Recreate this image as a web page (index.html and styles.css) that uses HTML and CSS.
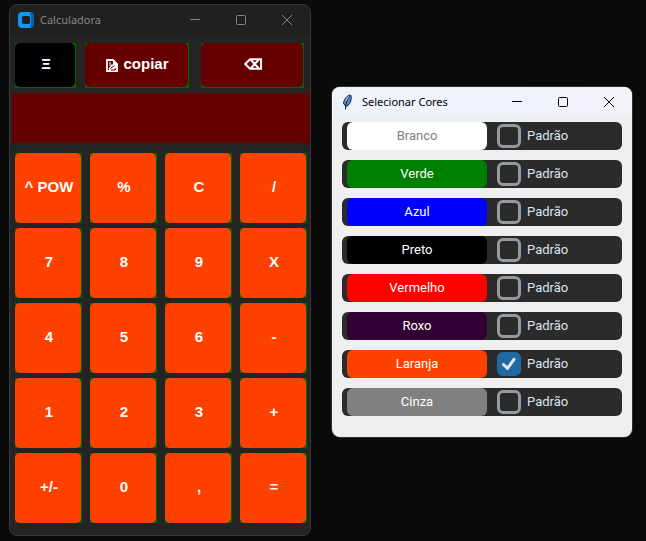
FILE: index.html
```
<!DOCTYPE html>
<html lang="pt">
<head>
<meta charset="utf-8">
<title>Calculadora</title>
<link rel="stylesheet" href="styles.css">
</head>
<body>
<main class="desktop">
  <section class="window calc">
    <header class="titlebar">
      <svg class="app-icon" width="16" height="16" viewBox="0 0 16 16"><path fill="#0c98fb" d="M4 0h9v16H4a4 4 0 0 1-4-4V4a4 4 0 0 1 4-4z"/><path fill="#0561ab" d="M12 0a4 4 0 0 1 4 4v8a4 4 0 0 1-4 4l1-4V4z"/><rect x="4" y="4" width="8" height="8" rx="1.5" fill="#202020"/></svg>
      <h1 class="title">Calculadora</h1>
      <div class="controls">
        <button class="control" aria-label="Minimizar"><svg width="12" height="12" viewBox="0 0 12 12"><path d="M1 5.500h10"/></svg></button>
        <button class="control" aria-label="Maximizar"><svg width="12" height="12" viewBox="0 0 12 12"><rect x="1.500" y="1.500" width="9" height="9" rx="1"/></svg></button>
        <button class="control" aria-label="Fechar"><svg width="12" height="12" viewBox="0 0 12 12"><path d="M1 1l10 10M11 1L1 11"/></svg></button>
      </div>
    </header>
    <div class="tools">
      <button class="key key-menu"><span>Ξ</span></button>
      <button class="key key-tool key-copy"><span><svg class="copy-icon" width="13" height="13" viewBox="0 0 13 13"><path d="M1 1h6l4 4v7H1z" fill="none" stroke="#fff" stroke-width="1.800"/><path d="M7 1v4h5L7 .5z" fill="#fff"/><path d="M3 4h2M3 6h3M3 10l1-2 5-4 3 3-5 4z" fill="#fff" stroke="#fff"/><path d="M4.500 9.500l4-3M5 11h4" stroke="#600000"/></svg>copiar</span></button>
      <button class="key key-tool" aria-label="Apagar"><span><svg width="18" height="12" viewBox="0 0 18 12"><path d="M6 1.200h11v9.600H6L1.200 6zM7 2l7.500 8M14.500 2L7 10" fill="none" stroke="#fff" stroke-width="2"/></svg></span></button>
    </div>
    <output class="display" aria-label="Resultado"></output>
    <div class="keypad">
      <button class="key"><span>^ POW</span></button>
      <button class="key"><span>%</span></button>
      <button class="key"><span>C</span></button>
      <button class="key"><span>/</span></button>
      <button class="key"><span>7</span></button>
      <button class="key"><span>8</span></button>
      <button class="key"><span>9</span></button>
      <button class="key"><span>X</span></button>
      <button class="key"><span>4</span></button>
      <button class="key"><span>5</span></button>
      <button class="key"><span>6</span></button>
      <button class="key"><span>-</span></button>
      <button class="key"><span>1</span></button>
      <button class="key"><span>2</span></button>
      <button class="key"><span>3</span></button>
      <button class="key"><span>+</span></button>
      <button class="key"><span>+/-</span></button>
      <button class="key"><span>0</span></button>
      <button class="key"><span>,</span></button>
      <button class="key"><span>=</span></button>
    </div>
  </section>

  <section class="window picker">
    <header class="titlebar">
      <svg class="app-icon" width="16" height="16" viewBox="0 0 16 16"><path d="M10.500 1c1.500 2 .5 7-1.500 9.500L6 12.500 3.500 9.500C4 5 7 1.500 10.500 1z" fill="#4f93dc" stroke="#151c2c"/><path d="M9.500 2.500C7 6 5.500 10 5.500 15.500" fill="none" stroke="#111"/><path d="M8.500 2.500L5.500 7" stroke="#c6e2ff"/></svg>
      <h2 class="title">Selecionar Cores</h2>
      <div class="controls">
        <button class="control" aria-label="Minimizar"><svg width="12" height="12" viewBox="0 0 12 12"><path d="M1 5.500h10"/></svg></button>
        <button class="control" aria-label="Maximizar"><svg width="12" height="12" viewBox="0 0 12 12"><rect x="1.500" y="1.500" width="9" height="9" rx="1"/></svg></button>
        <button class="control" aria-label="Fechar"><svg width="12" height="12" viewBox="0 0 12 12"><path d="M1 1l10 10M11 1L1 11"/></svg></button>
      </div>
    </header>
    <div class="colors">
      <div class="color-row"><button class="swatch white">Branco</button><label class="default"><input type="checkbox">Padrão</label></div>
      <div class="color-row"><button class="swatch green">Verde</button><label class="default"><input type="checkbox">Padrão</label></div>
      <div class="color-row"><button class="swatch blue">Azul</button><label class="default"><input type="checkbox">Padrão</label></div>
      <div class="color-row"><button class="swatch black">Preto</button><label class="default"><input type="checkbox">Padrão</label></div>
      <div class="color-row"><button class="swatch red">Vermelho</button><label class="default"><input type="checkbox">Padrão</label></div>
      <div class="color-row"><button class="swatch purple">Roxo</button><label class="default"><input type="checkbox">Padrão</label></div>
      <div class="color-row"><button class="swatch orange">Laranja</button><label class="default"><input type="checkbox" checked><svg class="tick" width="24" height="24" viewBox="0 0 24 24"><path d="M6.500 12.500l4 3.800 6.500-9"/></svg>Padrão</label></div>
      <div class="color-row"><button class="swatch gray">Cinza</button><label class="default"><input type="checkbox">Padrão</label></div>
    </div>
  </section>
</main>
</body>
</html>
```
FILE: styles.css
```
* {
  box-sizing: border-box;
}

body {
  margin: 0;
  background: #0a0a0a;
}

button {
  margin: 0;
  padding: 0;
  border: 0;
  background: none;
  color: inherit;
  font: inherit;
}

.desktop {
  display: grid;
  grid-template-columns: 302fr 300fr;
  column-gap: 21px;
  align-items: start;
  padding: 4px 14px 4px 9px;
}

.window {
  border-radius: 8px;
  overflow: hidden;
}

.calc {
  border: 1px solid #383838;
  padding-bottom: 12px;
  background: #242424;
}

.picker {
  margin-top: 83px;
  background: #efefef;
  box-shadow: 0 0 0 1px #303030;
}

.titlebar {
  display: flex;
  align-items: center;
  height: 30px;
  padding-left: 8px;
  background: #202020;
  color: #858585;
}

.picker .titlebar {
  background: linear-gradient(90deg, #eef3fa, #f2f2f9);
  color: #000;
}

.app-icon {
  flex: none;
}

.title {
  flex: 1;
  margin: 0 0 0 6px;
  font: 11px/16px "Noto Sans", "Open Sans", sans-serif;
}

.controls {
  display: flex;
}

.control {
  display: grid;
  place-items: center;
  width: 46px;
  height: 30px;
}

.control svg {
  fill: none;
  stroke: currentColor;
}

.key {
  display: flex;
  height: 70px;
  padding-right: 1px;
  background: #006400;
  color: #fff;
  font: bold 15px/18px "Liberation Sans", Arial, sans-serif;
}

.key span {
  display: flex;
  flex: 1;
  align-items: center;
  justify-content: center;
  height: 100%;
  padding: 0 0 2px 2px;
  border-radius: 5px;
  background: #ff4100;
}

.tools {
  display: grid;
  grid-template-columns: 61fr 107fr 103fr;
  column-gap: 9px;
  padding: 8px 6px 5px 5px;
}

.tools .key {
  height: 45px;
  padding-bottom: 1px;
}

.key-copy {
  margin-right: 3px;
}

.key-menu span {
  background: #000;
}

.key-tool span {
  background: #640000;
}

.copy-icon {
  margin: 3px 4px 0 0;
}

.display {
  display: block;
  height: 50px;
  margin-left: 2px;
  background: #640000;
}

.keypad {
  display: grid;
  grid-template-columns: repeat(4, 1fr);
  gap: 5px 8px;
  padding: 10px 3px 0 5px;
}

.colors {
  display: grid;
  gap: 10px;
  padding: 5px 10px 21px;
}

.color-row {
  display: flex;
  height: 28px;
  padding-left: 5px;
  border-radius: 6px;
  background: #2b2b2b;
  font: 13px/16px Roboto, sans-serif;
}

.swatch {
  flex: 0 0 140px;
  border-radius: 6px;
  color: #fff;
}

.white { background: #fff; color: #808080; }
.green { background: #008000; }
.blue { background: #00f; }
.black { background: #000; }
.red { background: #f00; }
.purple { background: #330033; }
.orange { background: #ff4100; }
.gray { background: #808080; }

.default {
  position: relative;
  display: flex;
  align-items: center;
  gap: 6px;
  margin-left: 10px;
  color: #dce4ee;
}

.default input {
  appearance: none;
  width: 24px;
  height: 24px;
  margin: 0;
  border: 3px solid #949a9f;
  border-radius: 6px;
}

.default input:checked {
  border-color: #1f6aa5;
  background: #1f6aa5;
}

.tick {
  position: absolute;
  left: 0;
  fill: none;
  stroke: #e5e5e5;
  stroke-width: 3;
  stroke-linecap: round;
  stroke-linejoin: round;
  pointer-events: none;
}
```
